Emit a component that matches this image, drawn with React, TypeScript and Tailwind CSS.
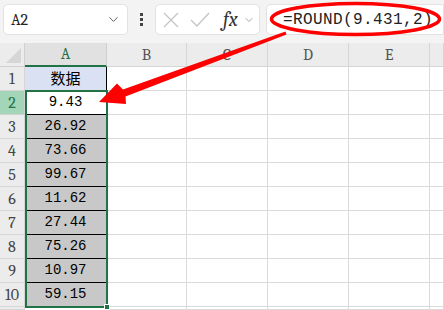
import { ChevronDown } from 'lucide-react'

const values = ['9.43', '26.92', '73.66', '99.67', '11.62', '27.44', '75.26', '10.97', '59.15']
const cols = ['A', 'B', 'C', 'D', 'E', '']

export default function App() {
  return (
    <div className="relative w-[444px] h-[310px] overflow-hidden bg-white font-['Liberation_Sans']">
      {/* formula bar */}
      <div className="h-[43px] bg-[#f3f3f3] flex items-start pt-[4px] pl-[3px]">
        <div className="w-[125px] h-[31px] bg-white border border-[#e2e2e2] rounded-[5px] flex items-center justify-between pl-[7px] pr-[6px]">
          <span className="font-serif text-[16px] text-[#222]">A2</span>
          <ChevronDown className="w-[15px] h-[15px] text-[#555]" strokeWidth={1.5} />
        </div>
        <div className="w-[27px] h-[31px] flex flex-col items-center justify-center gap-[2px]">
          <span className="w-[3px] h-[3px] bg-[#444]" />
          <span className="w-[3px] h-[3px] bg-[#444]" />
          <span className="w-[3px] h-[3px] bg-[#444]" />
        </div>
        <div className="w-[105px] h-[31px] bg-white border border-[#e2e2e2] rounded-[5px] flex items-center pl-[6px]">
          <svg width="16" height="16" viewBox="0 0 16 16" className="ml-[1px]">
            <path d="M1 1 L15 15 M15 1 L1 15" stroke="#c4c4c4" strokeWidth="1.3" fill="none" />
          </svg>
          <svg width="20" height="16" viewBox="0 0 20 16" className="ml-[11px]">
            <path d="M1 8 L7 14 L19 1" stroke="#c4c4c4" strokeWidth="1.3" fill="none" />
          </svg>
          <span className="font-serif italic text-[20px] text-[#333] ml-[13px] leading-none">fx</span>
          <ChevronDown className="w-[12px] h-[12px] text-[#888] ml-[5px]" strokeWidth={1.5} />
        </div>
        <div className="ml-[6px] flex-1 h-[31px] bg-white border border-[#e2e2e2] rounded-l-[5px] flex items-center pl-[16px]">
          <span className="font-['Liberation_Mono'] text-[16px] tracking-[0.4px] text-[#222]">=ROUND(9.431,2)</span>
        </div>
      </div>

      {/* sheet grid */}
      <div className="grid grid-cols-[25px_82px_80px_81px_81px_81px_1fr] grid-rows-[24px_repeat(10,24px)_1fr] h-[267px]">
        {/* header row */}
        <div className="relative bg-[#ececec] border-r border-b border-[#d0d0d0]">
          <div className="absolute right-[3px] bottom-[3px] w-0 h-0 border-l-[15px] border-l-transparent border-b-[15px] border-b-[#d6d6d6]" />
        </div>
        {cols.map((c, i) => (
          <div
            key={i}
            className={
              i === 0
                ? 'bg-[#e1e1e1] border-r border-[#d0d0d0] border-b-2 border-b-[#217346] flex items-center justify-center font-serif text-[16px] text-[#1f6e43]'
                : 'bg-[#ececec] border-r border-b border-[#d6d6d6] flex items-center justify-center font-serif text-[16px] text-[#555]'
            }
          >
            {c}
          </div>
        ))}

        {/* rows */}
        {Array.from({ length: 11 }).map((_, r) => {
          const row = r + 1
          const isSel = row === 2
          return [
            <div
              key={`h${r}`}
              className={
                isSel
                  ? 'bg-[#a3d5b8] border-r border-b border-[#d0d0d0] flex items-center justify-center font-serif text-[16px] text-[#217346]'
                  : 'bg-[#ececec] border-r border-b border-[#d6d6d6] flex items-center justify-center font-serif text-[16px] text-[#444]'
              }
            >
              {row <= 10 ? row : ''}
            </div>,
            <div
              key={`a${r}`}
              className={
                row === 1
                  ? "bg-[#d9e1f2] border-r border-b border-black flex items-center justify-center font-['Noto_Sans_CJK_SC',sans-serif] text-[15px] text-black"
                  : row === 2
                  ? "bg-white border-r border-b border-black flex items-center justify-center font-['Liberation_Mono'] text-[14px] text-black"
                  : row <= 10
                  ? "bg-[#c8c8c8] border-r border-b border-black flex items-center justify-center font-['Liberation_Mono'] text-[14px] text-black"
                  : 'bg-white border-r border-[#dadada]'
              }
            >
              {row === 1 ? '数据' : row <= 10 ? values[row - 2] : ''}
            </div>,
            ...[0, 1, 2, 3, 4].map((c) => (
              <div key={`c${r}-${c}`} className="border-r border-b border-[#dadada]" />
            )),
          ]
        })}
      </div>

      {/* selection A2:A10 */}
      <div className="absolute left-[25px] top-[90px] w-[83px] h-[218px] border-2 border-[#217346]" />
      <div className="absolute left-[104px] top-[304px] w-[6px] h-[6px] bg-[#217346] border border-white" />

      {/* annotation */}
      <svg className="absolute inset-0 pointer-events-none" width="444" height="310" viewBox="0 0 444 310">
        <ellipse cx="355.5" cy="19" rx="84" ry="15.5" fill="none" stroke="#ff0000" strokeWidth="3.5" />
        <polygon
          points="285.5,31.6 123,89.5 117,83.5 99,102 126,104 125.5,96.5 286.5,34.4"
          fill="#ff0000"
        />
      </svg>
    </div>
  )
}
